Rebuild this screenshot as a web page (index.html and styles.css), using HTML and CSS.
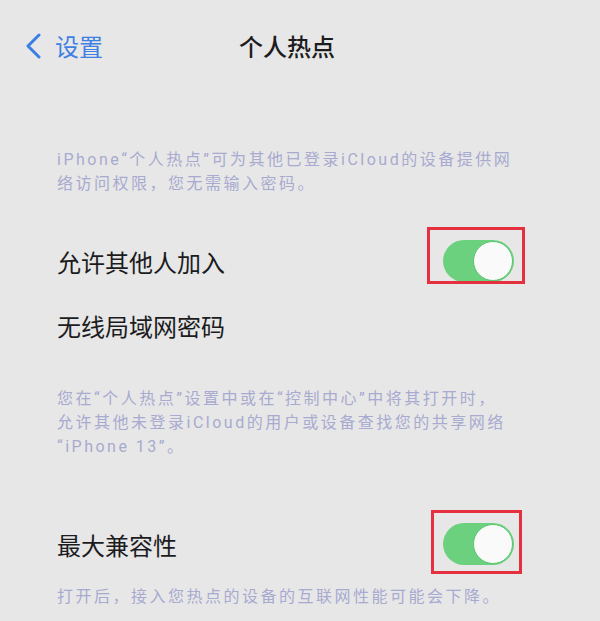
FILE: index.html
```html
<!DOCTYPE html>
<html lang="zh-CN">
<head>
<meta charset="utf-8">
<title>个人热点</title>
<link rel="stylesheet" href="styles.css">
</head>
<body>
<div class="screen">
  <header class="nav">
    <a class="back">
      <svg class="chev" width="16" height="26" viewBox="0 0 16 26"><polyline points="14,2 3,13 14,24" fill="none" stroke="#3b7fe6" stroke-width="3" stroke-linecap="round" stroke-linejoin="round"/></svg>
      <span class="back-text">设置</span>
    </a>
    <h1 class="title">个人热点</h1>
  </header>

  <p class="desc desc-1">iPhone“个人热点”可为其他已登录iCloud的设备提供网<br>络访问权限，您无需输入密码。</p>

  <div class="row row-1">
    <span class="label">允许其他人加入</span>
    <span class="toggle-wrap">
      <span class="toggle"><span class="knob"></span></span>
      <span class="mark mark-1"></span>
    </span>
  </div>
  <div class="row row-2">
    <span class="label">无线局域网密码</span>
  </div>

  <p class="desc desc-2">您在“个人热点”设置中或在“控制中心”中将其打开时，<br>允许其他未登录iCloud的用户或设备查找您的共享网络<br>“iPhone 13”。</p>

  <div class="row row-3">
    <span class="label">最大兼容性</span>
    <span class="toggle-wrap">
      <span class="toggle"><span class="knob"></span></span>
      <span class="mark mark-2"></span>
    </span>
  </div>

  <p class="desc desc-3">打开后，接入您热点的设备的互联网性能可能会下降。</p>
</div>
</body>
</html>
```

FILE: styles.css
```css
html, body {
  margin: 0;
  padding: 0;
  background: #e7e7e7;
}
body {
  font-family: "Noto Sans CJK SC", "Noto Sans", sans-serif;
  color: #1c1c1e;
}
.screen {
  width: 600px;
  height: 621px;
  overflow: hidden;
}
.nav {
  height: 92px;
  display: flex;
  align-items: center;
  padding-left: 25px;
}
.back {
  display: flex;
  align-items: center;
  gap: 14px;
  color: #3f80e4;
  font-size: 24px;
  line-height: 30px;
}
.chev {
  display: block;
}
.title {
  margin: 0 0 0 136px;
  font-size: 24px;
  font-weight: 500;
  line-height: 30px;
  color: #1c1c1e;
}
.desc {
  margin: 0;
  padding-left: 57px;
  font-family: Roboto, "Noto Sans CJK SC", sans-serif;
  font-size: 16px;
  line-height: 24px;
  letter-spacing: 2.5px;
  color: #a8aad0;
  white-space: nowrap;
}
.desc-1 {
  margin-top: 56px;
  margin-bottom: 34px;
}
.desc-2 {
  margin-top: 29px;
  margin-bottom: 54px;
}
.desc-3 {
  margin-top: 8px;
}
.row {
  height: 64px;
  display: flex;
  align-items: center;
  justify-content: space-between;
  padding: 0 86px 0 57px;
}
.label {
  font-size: 24px;
  line-height: 30px;
}
.toggle-wrap {
  position: relative;
  display: block;
  width: 71px;
  height: 42px;
  top: -1px;
}
.toggle {
  display: block;
  width: 71px;
  height: 42px;
  border-radius: 21px;
  background: #6bd17e;
  position: relative;
}
.knob {
  position: absolute;
  right: 1px;
  top: 1px;
  width: 38px;
  height: 38px;
  border-radius: 50%;
  background: #fafafa;
  border: 1px solid #5cc470;
}
.mark {
  position: absolute;
  border: 3px solid #e5313f;
  box-sizing: border-box;
}
.mark-1 {
  left: -16px;
  top: -13px;
  width: 98px;
  height: 57px;
}
.mark-2 {
  left: -12px;
  top: -13px;
  width: 91px;
  height: 64px;
}
```
